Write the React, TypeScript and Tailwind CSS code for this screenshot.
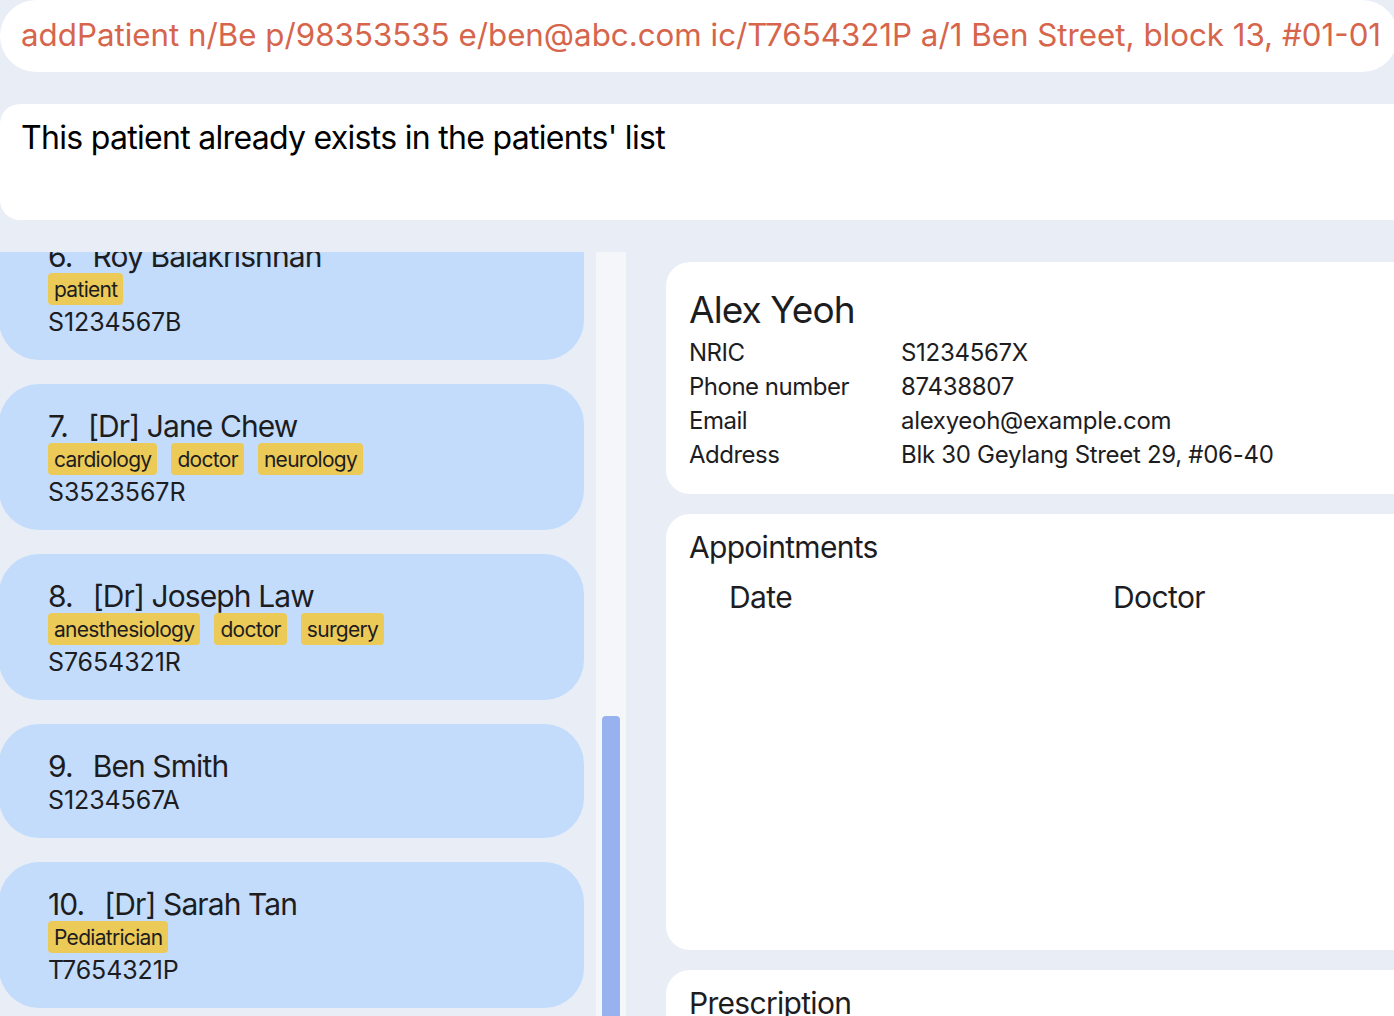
import React from "react";

type Patient = { no: string; name: string; tags: string[]; nric: string };

const patients: Patient[] = [
  { no: "6.", name: "Roy Balakrishnan", tags: ["patient"], nric: "S1234567B" },
  { no: "7.", name: "[Dr] Jane Chew", tags: ["cardiology", "doctor", "neurology"], nric: "S3523567R" },
  { no: "8.", name: "[Dr] Joseph Law", tags: ["anesthesiology", "doctor", "surgery"], nric: "S7654321R" },
  { no: "9.", name: "Ben Smith", tags: [], nric: "S1234567A" },
  { no: "10.", name: "[Dr] Sarah Tan", tags: ["Pediatrician"], nric: "T7654321P" },
];

function Card({ p, first }: { p: Patient; first?: boolean }) {
  return (
    <div
      className={
        "shrink-0 rounded-[40px] bg-[#c3dcfc] pl-[49px] pr-4 pt-[24px] pb-[20px] " +
        (first ? "mt-[-38px]" : "")
      }
    >
      <div className="flex h-[35px] items-center gap-[20px] text-[30px] leading-none tracking-[-0.9px] text-[#1d1d1f]">
        <span>{p.no}</span>
        <span>{p.name}</span>
      </div>
      {p.tags.length > 0 && (
        <div className="flex h-[32px] items-center gap-[14px]">
          {p.tags.map((t) => (
            <span
              key={t}
              className="flex h-[32px] items-center rounded-[4px] bg-[#ecca58] px-[6px] text-[21px] leading-none tracking-[-0.7px] text-[#1d1d1f]"
            >
              {t}
            </span>
          ))}
        </div>
      )}
      <div className="flex h-[35px] items-center text-[25px] leading-none tracking-[-0.1px] text-[#1d1d1f]">
        {p.nric}
      </div>
    </div>
  );
}

function Row({ label, value }: { label: string; value: string }) {
  return (
    <div className="flex h-[34px] items-center text-[24px] leading-none tracking-[-0.3px] text-[#1d1d1f]">
      <span className="w-[212px] tracking-[-0.5px]">{label}</span>
      <span>{value}</span>
    </div>
  );
}

export default function App() {
  return (
    <div
      className="flex h-[1016px] w-[1394px] flex-col overflow-hidden bg-[#e8edf6]"
      style={{ fontFamily: "Inter, 'Noto Sans', sans-serif" }}
    >
      <div className="mr-[-4px] flex h-[72px] shrink-0 items-center rounded-[36px] bg-white pl-[21px]">
        <span className="whitespace-nowrap text-[31.3px] leading-none tracking-[0px] text-[#d6654c]">
          addPatient n/Be p/98353535 e/ben@abc.com ic/T7654321P a/1 Ben Street, block 13, #01-01
        </span>
      </div>
      <div className="mr-[-20px] mt-[32px] h-[116px] shrink-0 rounded-l-[20px] bg-white pl-[21px] pt-[14px]">
        <span className="text-[32px] leading-[40px] tracking-[-0.7px] text-black">
          This patient already exists in the patients' list
        </span>
      </div>
      <div className="mt-[32px] flex min-h-0 flex-1">
        <div className="flex w-[626px] shrink-0">
          <div className="ml-[-1px] flex w-[585px] flex-col gap-[24px] overflow-hidden">
            {patients.map((p, i) => (
              <Card key={p.no} p={p} first={i === 0} />
            ))}
          </div>
          <div className="ml-[12px] flex w-[30px] flex-col bg-[#f4f6fa] px-[6px] pt-[464px]">
            <div className="flex-1 rounded-t-[4px] bg-[#97b2ee]" />
          </div>
        </div>
        <div className="ml-[40px] mr-[-30px] flex flex-1 flex-col gap-[20px] pt-[10px]">
          <div className="h-[232px] shrink-0 rounded-l-[24px] bg-white pl-[23px] pt-[23px]">
            <div className="flex h-[48px] items-center text-[37px] leading-none tracking-[-0.9px] text-[#1d1d1f]">
              Alex Yeoh
            </div>
            <div className="mt-[3px]">
              <Row label="NRIC" value="S1234567X" />
              <Row label="Phone number" value="87438807" />
              <Row label="Email" value="alexyeoh@example.com" />
              <Row label="Address" value="Blk 30 Geylang Street 29, #06-40" />
            </div>
          </div>
          <div className="h-[436px] shrink-0 rounded-l-[24px] bg-white pl-[23px] pt-[16px]">
            <div className="flex h-[34px] items-center text-[30px] leading-none tracking-[-0.7px] text-[#1d1d1f]">
              Appointments
            </div>
            <div className="mt-[16px] flex h-[34px] items-center pl-[40px] text-[30px] leading-none tracking-[-0.6px] text-[#1d1d1f]">
              <span className="w-[384px]">Date</span>
              <span>Doctor</span>
            </div>
          </div>
          <div className="h-[200px] shrink-0 rounded-l-[24px] bg-white pl-[23px] pt-[16px]">
            <div className="flex h-[34px] items-center text-[30px] leading-none tracking-[-0.7px] text-[#1d1d1f]">
              Prescription
            </div>
          </div>
        </div>
      </div>
    </div>
  );
}
